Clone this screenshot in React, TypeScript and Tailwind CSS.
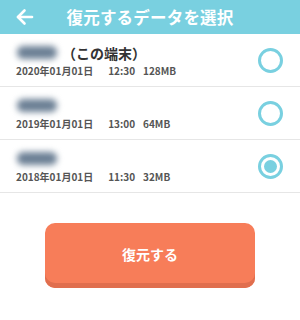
import React, { useState } from "react";

type Backup = {
  id: number;
  date: string;
  time: string;
  size: string;
  current?: boolean;
};

const backups: Backup[] = [
  { id: 1, date: "2020年01月01日", time: "12:30", size: "128MB", current: true },
  { id: 2, date: "2019年01月01日", time: "13:00", size: "64MB" },
  { id: 3, date: "2018年01月01日", time: "11:30", size: "32MB" },
];

const font = { fontFamily: '"Noto Sans CJK JP", "Noto Sans", sans-serif' };

function Radio({ checked }: { checked: boolean }) {
  return (
    <div className="w-[25px] h-[25px] rounded-full border-[3px] border-[#79d0e0] flex items-center justify-center shrink-0">
      {checked && <div className="w-[13px] h-[13px] rounded-full bg-[#79d0e0]" />}
    </div>
  );
}

export default function App() {
  const [selected, setSelected] = useState(3);

  return (
    <div className="w-[300px] h-[320px] bg-white overflow-hidden" style={font}>
      <header className="h-[34px] bg-[#79d0e0] flex items-center relative">
        <button className="absolute left-[13px] top-[5px] text-white">
          <svg width="24" height="24" viewBox="0 0 24 24" fill="none" stroke="currentColor" strokeWidth="2.6" strokeLinecap="round" strokeLinejoin="round">
            <path d="M19 12H5" />
            <path d="M11.5 5.5 5 12l6.5 6.5" />
          </svg>
        </button>
        <h1 className="w-full text-center text-white font-bold text-[16.5px] leading-none tracking-[0.2px]">
          復元するデータを選択
        </h1>
      </header>

      <ul>
        {backups.map((b) => (
          <li
            key={b.id}
            onClick={() => setSelected(b.id)}
            className="h-[53px] border-b border-[#e6e6e6] flex items-center pl-[16px] pr-[17px] cursor-pointer"
          >
            <div className="flex-1 min-w-0 pt-[1px]">
              <div className="h-[20px] flex items-center">
                <div className="w-[40px] h-[13px] rounded-[6px] bg-[#6c8095] blur-[3px] ml-[1px]" />
                {b.current && (
                  <span className="ml-[5px] text-[14px] font-bold text-[#333] leading-none">（この端末）</span>
                )}
              </div>
              <div className="h-[16px] flex items-center text-[10px] font-bold text-[#555] leading-none">
                <span>{b.date}</span>
                <span className="ml-[15px]">{b.time}</span>
                <span className="ml-[8px]">{b.size}</span>
              </div>
            </div>
            <Radio checked={selected === b.id} />
          </li>
        ))}
      </ul>

      <div className="px-[45px] pt-[30px]">
        <button className="w-full h-[65px] rounded-[10px] bg-[#f77d59] shadow-[inset_0_-5px_0_#e06e4e] text-white font-bold text-[14px] pb-[3px]">
          復元する
        </button>
      </div>
    </div>
  );
}
